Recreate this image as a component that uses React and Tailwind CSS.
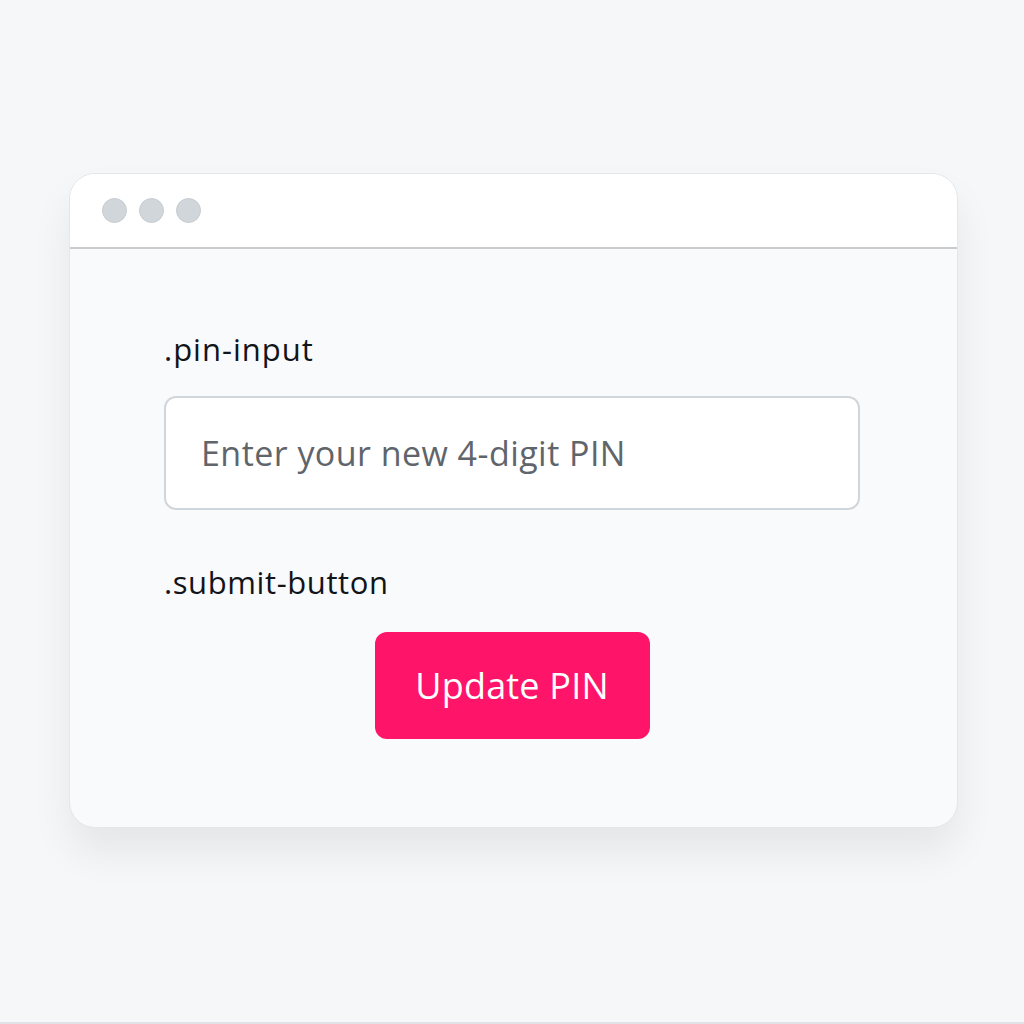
import React from 'react';

const font = { fontFamily: '"Open Sans", "Liberation Sans", sans-serif' };

const WindowDots = () => (
  <div className="flex items-center gap-[12px]">
    <span className="w-[25px] h-[25px] rounded-full bg-[#d1d6db] border border-[#c5cbd1]" />
    <span className="w-[25px] h-[25px] rounded-full bg-[#d1d6db] border border-[#c5cbd1]" />
    <span className="w-[25px] h-[25px] rounded-full bg-[#d1d6db] border border-[#c5cbd1]" />
  </div>
);

export default function App() {
  return (
    <div
      className="w-[1024px] h-[1024px] bg-[#f6f7f9] border-b-2 border-[#dfe2e6] pt-[173px] pl-[69px]"
      style={font}
    >
      <div className="w-[889px] h-[655px] rounded-[26px] bg-[#f9fafb] border border-[#e4e6ea] shadow-[0_24px_40px_rgba(0,0,0,0.07)] overflow-hidden flex flex-col">
        <div className="h-[75px] shrink-0 bg-white border-b-2 border-[#c9cccf] flex items-center pl-[32px]">
          <WindowDots />
        </div>
        <div className="flex flex-col pl-[94px] pr-[97px] pt-[81px]">
          <label className="text-[31px] leading-[38px] text-[#111418] tracking-[1px]">.pin-input</label>
          <input
            type="text"
            placeholder="Enter your new 4-digit PIN"
            className="mt-[28px] w-full h-[114px] rounded-[12px] border-2 border-[#cfd6dc] bg-white px-[35px] text-[34px] tracking-[0.45px] text-[#5f656b] placeholder:text-[#5f656b] outline-none"
          />
          <label className="mt-[53px] text-[31px] leading-[38px] text-[#111418] tracking-[0.6px]">.submit-button</label>
          <div className="flex justify-center mt-[31px]">
            <button className="w-[275px] h-[107px] rounded-[12px] bg-[#fe1569] text-white text-[36px] tracking-[0.2px]">
              Update PIN
            </button>
          </div>
        </div>
      </div>
    </div>
  );
}
